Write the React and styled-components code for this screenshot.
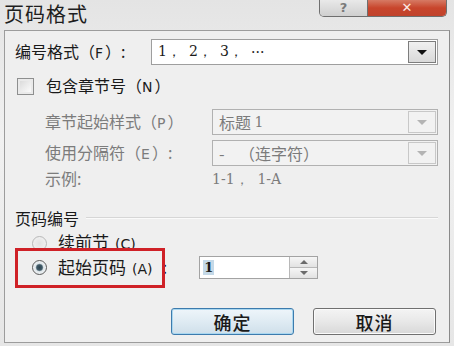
import React from 'react'
import styled, { createGlobalStyle } from 'styled-components'

const GlobalStyle = createGlobalStyle`
  html, body {
    margin: 0;
    padding: 0;
    background: #e9e9e9;
  }
  body {
    font-family: "Noto Sans CJK SC", "Liberation Sans", sans-serif;
  }
`

const Window = styled.div`
  width: 454px;
  height: 346px;
  box-sizing: border-box;
  display: flex;
  flex-direction: column;
  background: linear-gradient(180deg, #e4e4e4 0%, #f1f1f1 40%, #e6e6e6 100%);
  overflow: hidden;
`

const TitleBar = styled.div`
  height: 30px;
  flex: none;
  display: flex;
  align-items: flex-start;
  justify-content: space-between;
  padding: 0 7px 0 4px;
  box-sizing: border-box;
`

const Title = styled.div`
  font-size: 20px;
  line-height: 27px;
  color: #1e1e1e;
  letter-spacing: 1px;
`

const Controls = styled.div`
  display: flex;
  height: 16px;
  border: 1px solid #6f6f6f;
  border-top: none;
  border-radius: 0 0 5px 5px;
  overflow: hidden;
`

const CtlButton = styled.div`
  width: ${p => p.$w}px;
  display: flex;
  align-items: center;
  justify-content: center;
  font-family: "DejaVu Sans", sans-serif;
  font-weight: bold;
  font-size: 13px;
  line-height: 14px;
  color: ${p => (p.$close ? '#fbe9e4' : '#7a7a7a')};
  background: ${p => (p.$close
    ? 'linear-gradient(180deg, #d67a64 0%, #c8452c 50%, #c0432c 100%)'
    : 'linear-gradient(180deg, #e9e9e9 0%, #cfcfcf 100%)')};
  & + & {
    border-left: 1px solid #6f6f6f;
  }
`

const Panel = styled.div`
  flex: 1;
  margin: 0 4px 3px 4px;
  border: 1px solid #9c9c9c;
  border-right-color: #8a8a8a;
  background: #efefef;
  padding: 0 11px 0 10px;
  display: flex;
  flex-direction: column;
  color: #1a1a1a;
  font-size: 16px;
`

const Row = styled.div`
  display: flex;
  align-items: center;
  height: ${p => p.$h || 26}px;
  margin-top: ${p => p.$mt || 0}px;
  flex: none;
`

const Label = styled.span`
  width: ${p => p.$w ? `${p.$w}px` : 'auto'};
  flex: none;
  color: ${p => (p.$dim ? '#7c7c7c' : '#1a1a1a')};
  font-size: ${p => p.$size || 16}px;
  white-space: pre;
  line-height: 20px;
`

const Key = styled.span`
  font-size: 14px;
  font-family: "DejaVu Sans", "Liberation Sans", sans-serif;
  margin-left: ${p => p.$ml || 0}px;
  margin-right: 2px;
`

const Colon = styled.span`
  margin-left: 8px;
`

const Select = styled.div`
  flex: 1;
  height: 26px;
  box-sizing: border-box;
  border: 1px solid ${p => (p.$disabled ? '#b1b1b1' : '#9e9e9e')};
  background: ${p => (p.$disabled ? '#f2f2f2' : '#ffffff')};
  display: flex;
  align-items: stretch;
  color: ${p => (p.$disabled ? '#7b7b7b' : '#1a1a1a')};
`

const SelectValue = styled.div`
  flex: 1;
  display: flex;
  align-items: center;
  padding-left: ${p => p.$pl || 6}px;
  font-size: 16px;
  white-space: pre;
`

const Digits = styled.span`
  font-family: "DejaVu Serif", "Liberation Serif", serif;
  font-size: 14px;
  white-space: pre;
`

const NumItem = styled(Digits)`
  display: inline-block;
  width: 31px;
`

const ArrowBtn = styled.div`
  width: 28px;
  margin: 1px;
  box-sizing: border-box;
  border: 1px solid ${p => (p.$disabled ? '#c8c8c8' : '#7d7d7d')};
  background: ${p => (p.$disabled ? '#f2f2f2' : 'linear-gradient(180deg, #f0f0f0, #d9d9d9)')};
  display: flex;
  align-items: center;
  justify-content: center;
`

const Arrow = styled.div`
  width: 0;
  height: 0;
  border-left: 5px solid transparent;
  border-right: 5px solid transparent;
  border-top: 5px solid ${p => (p.$disabled ? '#b4b4b4' : '#111')};
`

const Checkbox = styled.div`
  width: 17px;
  height: 17px;
  box-sizing: border-box;
  margin: 0 12px 0 2px;
  border: 1px solid #8e8f8f;
  background: linear-gradient(135deg, #d6d6d6 0%, #f4f4f4 70%, #ffffff 100%);
  box-shadow: inset 0 0 0 2px #eaeaea;
`

const SubRow = styled(Row)`
  padding-left: 30px;
`

const SectionTitle = styled.div`
  display: flex;
  align-items: center;
  height: 20px;
  margin-top: 21px;
  flex: none;
  gap: 7px;
  &::after {
    content: '';
    flex: 1;
    height: 1px;
    background: #d6d6d6;
    border-bottom: 1px solid #fafafa;
  }
`

const RadioRow = styled(Row)`
  position: relative;
  padding-left: 17px;
`

const Radio = styled.div`
  width: 15px;
  height: 15px;
  flex: none;
  border-radius: 50%;
  box-sizing: border-box;
  margin-right: 11px;
  border: 1px solid ${p => (p.$checked ? '#5a5a5a' : '#b8b8b8')};
  background: radial-gradient(circle, ${p => (p.$checked
    ? '#2f4450 0%, #3f5a68 30%, #dfe6ea 45%, #ffffff 100%'
    : '#e2e2e2 0%, #f4f4f4 100%')});
`

const Highlight = styled.div`
  position: absolute;
  left: 0;
  top: -8px;
  width: 150px;
  height: 40px;
  box-sizing: border-box;
  border: 3px solid #cf2127;
  pointer-events: none;
`

const NumberBox = styled.div`
  width: 119px;
  height: 23px;
  margin-left: 32px;
  box-sizing: border-box;
  border: 1px solid #a3a3a3;
  background: #fff;
  display: flex;
`

const NumberValue = styled.div`
  flex: 1;
  display: flex;
  align-items: center;
  padding-left: 3px;
  span {
    background: #c4d9e8;
    font-family: "DejaVu Serif", serif;
    font-weight: bold;
    font-size: 13px;
    padding: 0 1px;
  }
`

const Spin = styled.div`
  width: 27px;
  display: flex;
  flex-direction: column;
  border-left: 1px solid #b8b8b8;
`

const SpinHalf = styled.div`
  flex: 1;
  display: flex;
  align-items: center;
  justify-content: center;
  background: linear-gradient(180deg, #f6f6f6, #e2e2e2);
  & + & {
    border-top: 1px solid #b8b8b8;
  }
  &::before {
    content: '';
    border-left: 4px solid transparent;
    border-right: 4px solid transparent;
    ${p => (p.$up ? 'border-bottom: 4px solid #6b6b6b;' : 'border-top: 4px solid #6b6b6b;')}
  }
`

const ButtonRow = styled.div`
  display: flex;
  justify-content: flex-end;
  gap: 19px;
  margin-top: 29px;
  padding-right: 2px;
`

const Button = styled.div`
  width: 123px;
  height: 27px;
  box-sizing: border-box;
  border-radius: 3px;
  border: 1px solid ${p => (p.$default ? '#3d7bad' : '#707070')};
  background: ${p => (p.$default
    ? 'linear-gradient(180deg, #eef5fa 0%, #dfebf3 50%, #cfdfea 100%)'
    : 'linear-gradient(180deg, #f4f4f4 0%, #e8e8e8 50%, #d8d8d8 100%)')};
  box-shadow: inset 0 0 0 1px ${p => (p.$default ? '#a9d7f0' : '#fbfbfb')};
  display: flex;
  align-items: center;
  justify-content: center;
  font-size: 18px;
  font-weight: 500;
  color: #1a1a1a;
  letter-spacing: 1px;
`

const sequence = ['1，', '2，', '3，', '···']

export default function App() {
  return (
    <>
      <GlobalStyle />
      <Window>
        <TitleBar>
          <Title>页码格式</Title>
          <Controls>
            <CtlButton $w={47}>?</CtlButton>
            <CtlButton $w={78} $close>✕</CtlButton>
          </Controls>
        </TitleBar>
        <Panel>
          <Row $mt={8}>
            <Label $w={136}>编号格式（<Key>F</Key>）:</Label>
            <Select>
              <SelectValue $pl={6}>
                {sequence.map(s => <NumItem key={s}>{s}</NumItem>)}
              </SelectValue>
              <ArrowBtn><Arrow /></ArrowBtn>
            </Select>
          </Row>

          <Row $h={18} $mt={12}>
            <Checkbox />
            <Label>包含章节号（<Key>N</Key>）</Label>
          </Row>

          <SubRow $mt={14}>
            <Label $w={167} $dim>章节起始样式（<Key>P</Key>）</Label>
            <Select $disabled>
              <SelectValue>标题 <Digits>1</Digits></SelectValue>
              <ArrowBtn $disabled><Arrow $disabled /></ArrowBtn>
            </Select>
          </SubRow>

          <SubRow $mt={5}>
            <Label $w={167} $dim>使用分隔符（<Key>E</Key>）:</Label>
            <Select $disabled>
              <SelectValue>-    （连字符）</SelectValue>
              <ArrowBtn $disabled><Arrow $disabled /></ArrowBtn>
            </Select>
          </SubRow>

          <SubRow $h={18} $mt={3}>
            <Label $w={167} $dim>示例:</Label>
            <Label $dim><Digits>1-1，  1-A</Digits></Label>
          </SubRow>

          <SectionTitle>页码编号</SectionTitle>

          <RadioRow $h={18} $mt={6}>
            <Radio />
            <Label $size={17}>续前节<Key $ml={6}>(C)</Key></Label>
          </RadioRow>

          <RadioRow $h={23} $mt={4}>
            <Highlight />
            <Radio $checked />
            <Label $size={17}>起始页码<Key $ml={6}>(A)</Key><Colon>:</Colon></Label>
            <NumberBox>
              <NumberValue><span>1</span></NumberValue>
              <Spin>
                <SpinHalf $up />
                <SpinHalf />
              </Spin>
            </NumberBox>
          </RadioRow>

          <ButtonRow>
            <Button $default>确定</Button>
            <Button>取消</Button>
          </ButtonRow>
        </Panel>
      </Window>
    </>
  )
}
